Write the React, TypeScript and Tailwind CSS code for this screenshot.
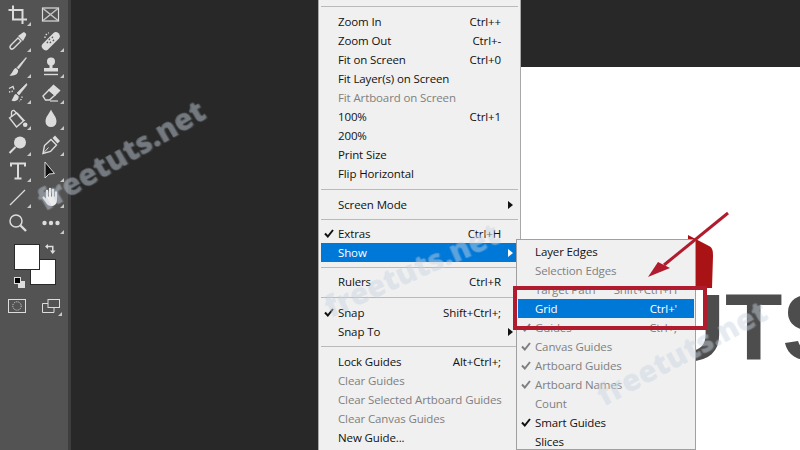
import { type ReactNode } from 'react';

const MENU_FONT = "font-['Open_Sans',sans-serif] text-[11.5px] tracking-[-0.12px]";

type Tool = { key: string; more?: boolean; icon: ReactNode };

const Glyph = ({ children }: { children: ReactNode }) => (
  <svg width="20" height="20" viewBox="0 0 20 20" fill="none" stroke="#dcdcdc" strokeWidth="1.4">
    {children}
  </svg>
);

const TOOLS: Tool[] = [
  {
    key: 'crop',
    more: true,
    icon: (
      <Glyph>
        <path d="M5 0.5V14.5H19M0.5 5H14.5V19" strokeWidth="2" />
      </Glyph>
    ),
  },
  {
    key: 'frame',
    icon: (
      <Glyph>
        <rect x="1.5" y="3" width="16" height="13" strokeWidth="1.2" />
        <path d="M2 3.5L17 15.5M17 3.5L2 15.5" strokeWidth="1.6" stroke="#c4c4c4" />
      </Glyph>
    ),
  },
  {
    key: 'eyedropper',
    more: true,
    icon: (
      <Glyph>
        <path d="M2.5 17.5C1.5 16.5 2 15 3 14L10 7L13 10L6 17C5 18 3.5 18.5 2.5 17.5Z" />
        <path d="M10 5L15 1.5C16.5 .8 18.8 3 18 4.5L15 10Z" fill="#dcdcdc" stroke="none" />
      </Glyph>
    ),
  },
  {
    key: 'healing',
    more: true,
    icon: (
      <Glyph>
        <path d="M1.5 13L12.5 2C14 .5 16 .8 17.5 2.3S19.5 6 18 7.5L7 18.5C5.5 20 3.5 19.5 2 18S0 14.5 1.500 13Z" fill="#dcdcdc" stroke="none" />
        <path d="M8 8l.8.8M11 6l.8.8M6 11l.8.8M9 11l.8.8M12 9l.8.8" stroke="#535353" strokeWidth="1.8" />
        <path d="M4 7A5 5 0 0 1 8 2" strokeDasharray="1.5 1.5" strokeWidth="1.3" />
      </Glyph>
    ),
  },
  {
    key: 'brush',
    more: true,
    icon: (
      <Glyph>
        <path d="M18 0.5L9 10.500L10.500 12L18.500 1Z" fill="#dcdcdc" strokeWidth=".6" />
        <path d="M8 11C5 11.500 5.500 15 1.500 18.500C6 19.500 11 17 10 13Z" fill="#dcdcdc" stroke="none" />
      </Glyph>
    ),
  },
  {
    key: 'stamp',
    more: true,
    icon: (
      <Glyph>
        <circle cx="10" cy="4.500" r="4" fill="#dcdcdc" stroke="none" />
        <path d="M8.500 8H11.500V11H17V14.500H3V11H8.500Z" fill="#dcdcdc" stroke="none" />
        <path d="M3 17.500H17" />
      </Glyph>
    ),
  },
  {
    key: 'mixer',
    more: true,
    icon: (
      <Glyph>
        <path d="M18.500 0.500L9 10L11 12L19 2Z" fill="#dcdcdc" strokeWidth=".6" />
        <path d="M8 11C6 11 6 14 3.500 17.500C7 19.500 11.500 17 10.500 13Z" fill="#dcdcdc" stroke="none" />
        <path d="M1 5.500L5 3.500L6 6.500" strokeWidth="1.300" />
        <path d="M1 9L6 8M14 13.500A5 5 0 0 1 11 18" strokeDasharray="1.300 1.300" />
      </Glyph>
    ),
  },
  {
    key: 'eraser',
    more: true,
    icon: (
      <Glyph>
        <path d="M2 13L8 7L14 12L8.500 17H4.500Z" />
        <path d="M8 7L12.500 2.500L18.500 7.500L14 12Z" fill="#dcdcdc" />
        <path d="M9 18H17" strokeWidth="1.200" />
      </Glyph>
    ),
  },
  {
    key: 'bucket',
    more: true,
    icon: (
      <Glyph>
        <path d="M1.500 9L8.500 4L15.500 12L8.500 18Z" />
        <path d="M8.500 4L6 1.500C5 1 3.500 2 3.500 3.500V8" />
        <path d="M3 8L8.500 4L15.500 12H17.500L9.500 3.500Z" fill="#dcdcdc" stroke="none" />
        <circle cx="17.200" cy="15.800" r="2.300" fill="#dcdcdc" stroke="none" />
      </Glyph>
    ),
  },
  {
    key: 'blur',
    more: true,
    icon: (
      <Glyph>
        <path d="M10 0.500C11.500 4.500 15.500 7.500 15.500 12.500A5.500 5.500 0 0 1 4.500 12.500C4.500 7.500 8.500 4.500 10 0.500Z" fill="#dcdcdc" stroke="none" />
      </Glyph>
    ),
  },
  {
    key: 'dodge',
    more: true,
    icon: (
      <Glyph>
        <circle cx="12" cy="7.500" r="6" fill="#dcdcdc" stroke="none" />
        <path d="M7.500 12L1.500 18" strokeWidth="2" />
      </Glyph>
    ),
  },
  {
    key: 'pen',
    more: true,
    icon: (
      <Glyph>
        <path d="M2 18.500L3.500 10.500L10 4.500L15.500 10L9.500 16.500Z" />
        <path d="M2.500 18L7.500 12.500" strokeWidth="1" />
        <path d="M11.500 3L14 0.500L19 6L16.500 8.500Z" fill="#dcdcdc" stroke="none" />
      </Glyph>
    ),
  },
  {
    key: 'type',
    more: true,
    icon: (
      <Glyph>
        <path d="M3 5.500V2.500H17V5.500M10 2.500V17.500M6.500 17.500H13.500" strokeWidth="2" />
      </Glyph>
    ),
  },
  {
    key: 'select',
    more: true,
    icon: (
      <Glyph>
        <path d="M4 1V17L8 13L13.500 12.500Z" fill="#111" stroke="#d8d8d8" strokeWidth="1" />
      </Glyph>
    ),
  },
  {
    key: 'line',
    more: true,
    icon: (
      <Glyph>
        <path d="M2 18L17 3" strokeWidth="1.200" />
      </Glyph>
    ),
  },
  {
    key: 'hand',
    more: true,
    icon: (
      <Glyph>
        <path d="M6 10.500V4M9 9.500V2M12 9.500V3M15 10.500V5.500" stroke="#ececec" strokeWidth="2.300" strokeLinecap="round" />
        <path d="M5 9.500H16V13C16 16.500 14 19 10.500 19C7.500 19 6 17.500 4.500 15L1.500 11C1 10 2.500 9 3.500 10L5 11.500Z" fill="#ececec" stroke="none" />
      </Glyph>
    ),
  },
  {
    key: 'zoom',
    icon: (
      <Glyph>
        <circle cx="8" cy="8" r="6" strokeWidth="1.500" />
        <path d="M12.500 12.500L18 18" strokeWidth="2.400" />
      </Glyph>
    ),
  },
  {
    key: 'more',
    more: true,
    icon: (
      <Glyph>
        <circle cx="3.500" cy="10" r="2.200" fill="#dcdcdc" stroke="none" />
        <circle cx="10" cy="10" r="2.200" fill="#dcdcdc" stroke="none" />
        <circle cx="16.500" cy="10" r="2.200" fill="#dcdcdc" stroke="none" />
      </Glyph>
    ),
  },
];

function Toolbar() {
  return (
    <aside className="flex h-full w-[71px] shrink-0 flex-col border-r-[3px] border-r-[#3d3d3d] bg-[#535353] pt-[2px] pl-px">
      <div className="grid w-[66px] grid-cols-2 auto-rows-[26px]">
        {TOOLS.map((t) => (
          <div key={t.key} className="relative flex items-center justify-center">
            {t.icon}
            {t.more && (
              <span className="absolute right-[3px] bottom-[2px] h-0 w-0 border-b-[4px] border-l-[4px] border-b-[#c8c8c8] border-l-transparent" />
            )}
          </div>
        ))}
      </div>

      <div className="relative mt-[8px] ml-[13px] h-[42px] w-[42px]">
        <span className="absolute top-[15px] left-[16px] h-[26px] w-[26px] border border-[#2a2a2a] bg-white" />
        <span className="absolute top-0 left-0 h-[26px] w-[26px] border border-[#2a2a2a] bg-white" />
        <svg className="absolute top-0 left-[31px]" width="11" height="11" viewBox="0 0 11 11" fill="#dcdcdc">
          <path d="M0 2.500L3 0V1.800H8.500V6.500H10.500L7.700 10L5 6.500H7V3.200H3V5Z" />
        </svg>
      </div>
      <div className="relative -mt-[9px] ml-[13px] h-[11px] w-[11px]">
        <span className="absolute right-0 bottom-0 h-[7px] w-[7px] bg-[#dcdcdc]" />
        <span className="absolute top-0 left-0 h-[7px] w-[7px] border border-[#dcdcdc] bg-black" />
      </div>

      <div className="mt-[11px] ml-[7px] flex w-[52px] justify-between">
        <svg width="18" height="14" viewBox="0 0 18 14" fill="none" stroke="#dcdcdc">
          <rect x=".5" y=".5" width="17" height="13" />
          <circle cx="9" cy="7" r="4.200" strokeDasharray="1 1" />
        </svg>
        <div className="relative">
          <svg width="18" height="14" viewBox="0 0 18 14" fill="none" stroke="#dcdcdc">
            <rect x="6" y=".5" width="11.500" height="8" />
            <path d="M6 4.500H.5V13.500H12V8.500" />
          </svg>
          <span className="absolute -right-[2px] -bottom-[3px] h-0 w-0 border-b-[4px] border-l-[4px] border-b-[#c8c8c8] border-l-transparent" />
        </div>
      </div>
    </aside>
  );
}

type Item = {
  label?: string;
  shortcut?: string;
  disabled?: boolean;
  checked?: boolean;
  active?: boolean;
  submenu?: boolean;
  gap?: string;
};

const VIEW_MENU: Item[] = [
  { label: 'Zoom In', shortcut: 'Ctrl++' },
  { label: 'Zoom Out', shortcut: 'Ctrl+-' },
  { label: 'Fit on Screen', shortcut: 'Ctrl+0' },
  { label: 'Fit Layer(s) on Screen' },
  { label: 'Fit Artboard on Screen', disabled: true },
  { label: '100%', shortcut: 'Ctrl+1' },
  { label: '200%' },
  { label: 'Print Size' },
  { label: 'Flip Horizontal' },
  { gap: 'h-[12px]' },
  { label: 'Screen Mode', submenu: true },
  { gap: 'h-[10px]' },
  { label: 'Extras', shortcut: 'Ctrl+H', checked: true },
  { label: 'Show', submenu: true, active: true },
  { gap: 'h-[10px]' },
  { label: 'Rulers', shortcut: 'Ctrl+R' },
  { gap: 'h-[12px]' },
  { label: 'Snap', shortcut: 'Shift+Ctrl+;', checked: true },
  { label: 'Snap To', submenu: true },
  { gap: 'h-[11px]' },
  { label: 'Lock Guides', shortcut: 'Alt+Ctrl+;' },
  { label: 'Clear Guides', disabled: true },
  { label: 'Clear Selected Artboard Guides', disabled: true },
  { label: 'Clear Canvas Guides', disabled: true },
  { label: 'New Guide...' },
];

const SHOW_MENU: Item[] = [
  { label: 'Layer Edges' },
  { label: 'Selection Edges', disabled: true },
  { label: 'Target Path', shortcut: 'Shift+Ctrl+H', disabled: true },
  { label: 'Grid', shortcut: "Ctrl+'", active: true },
  { label: 'Guides', shortcut: 'Ctrl+;', disabled: true, checked: true },
  { label: 'Canvas Guides', disabled: true, checked: true },
  { label: 'Artboard Guides', disabled: true, checked: true },
  { label: 'Artboard Names', disabled: true, checked: true },
  { label: 'Count', disabled: true },
  { label: 'Smart Guides', checked: true },
  { label: 'Slices' },
];

function MenuRows({ items }: { items: Item[] }) {
  return (
    <>
      {items.map((item, i) => {
        if (item.gap) {
          return (
            <div key={i} className={`flex items-center ${item.gap}`}>
              <div className="h-px w-full bg-[#b9b9b9]" />
            </div>
          );
        }
        const tone = item.active ? 'bg-[#0078d7] text-white' : item.disabled ? 'text-[#7f7f7f]' : 'text-[#111]';
        return (
          <div key={i} className={`relative flex h-[19px] items-center justify-between pr-[17px] pl-[17px] ${tone}`}>
            {item.checked && (
              <svg
                className="absolute top-[5px] left-[3px]"
                width="10"
                height="9"
                viewBox="0 0 10 9"
                fill="none"
                stroke={item.disabled ? '#7f7f7f' : '#111'}
                strokeWidth="2"
              >
                <path d="M1 4.500L3.800 7.500L9 1" />
              </svg>
            )}
            <span className="whitespace-nowrap">{item.label}</span>
            {item.shortcut && <span className="whitespace-nowrap">{item.shortcut}</span>}
            {item.submenu && (
              <span
                className={`absolute top-[6px] right-[5px] h-0 w-0 border-y-[4px] border-l-[5px] border-y-transparent ${
                  item.active ? 'border-l-white' : 'border-l-[#111]'
                }`}
              />
            )}
          </div>
        );
      })}
    </>
  );
}

function Watermark({ className }: { className: string }) {
  return (
    <span
      className={`pointer-events-none absolute font-['Open_Sans',sans-serif] text-[30px] leading-none font-extrabold whitespace-nowrap text-[rgba(190,205,220,0.4)] blur-[0.4px] [text-shadow:1px_1px_0_rgba(255,255,255,0.12)] ${className}`}
    >
      freetuts.net
    </span>
  );
}

export default function App() {
  return (
    <div className="relative flex h-[450px] w-[800px] overflow-hidden bg-[#282828]">
      <Toolbar />

      {/* canvas with the open document */}
      <main className="flex-1 pt-[67px] pl-[450px]">
        <div className="relative h-full overflow-hidden bg-white">
          <span className="absolute top-[214px] left-[136px] font-['Liberation_Sans',sans-serif] text-[94px] leading-none font-bold text-[#4d4d4d]">
            UTS
          </span>
          <svg className="absolute top-[165px] left-[160px]" width="40" height="60" viewBox="0 0 40 60" fill="#a91316">
            <path d="M7 3L28 14C32 16 32 20 32 24L31 56H7Z" />
          </svg>
        </div>
      </main>

      {/* View menu */}
      <div className={`absolute top-0 left-[318px] h-[450px] w-[203px] border-x border-x-[#a8a8a8] bg-[#f0f0f0] px-[2px] pt-[6px] ${MENU_FONT}`}>
        <div className="mb-[5px] h-px bg-[#b9b9b9]" />
        <MenuRows items={VIEW_MENU} />
      </div>

      {/* Show submenu */}
      <div className={`absolute top-[239px] left-[516px] h-[211px] w-[180px] border border-[#a0a0a0] bg-[#f0f0f0] px-px pt-[2px] ${MENU_FONT}`}>
        <MenuRows items={SHOW_MENU} />
      </div>

      {/* callout drawn over the screenshot */}
      <div className="absolute top-[286px] left-[513px] h-[44px] w-[194px] border-[4px] border-[#b01c2e]" />
      <svg className="absolute top-[210px] left-[640px]" width="95" height="75" viewBox="0 0 95 75">
        <path d="M88 3L24 55" stroke="#b01c2e" strokeWidth="3" />
        <path d="M8 67L18 52L30 58Z" fill="#b01c2e" />
      </svg>

      <Watermark className="top-[140px] left-[27px] -rotate-[30deg]" />
      <Watermark className="top-[255px] left-[318px] -rotate-[24deg]" />
      <Watermark className="top-[338px] left-[588px] -rotate-[28deg]" />
    </div>
  );
}
